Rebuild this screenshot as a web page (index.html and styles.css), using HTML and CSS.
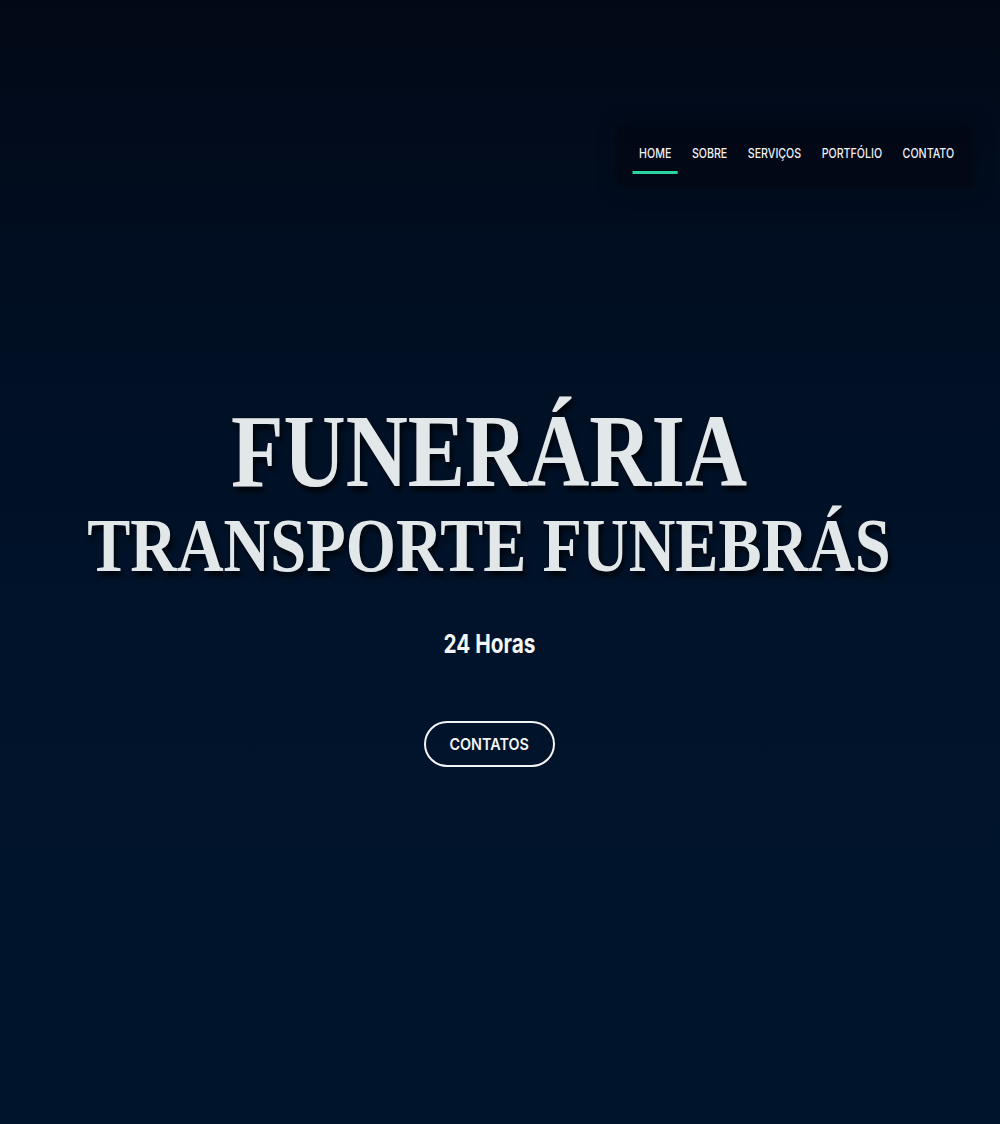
FILE: index.html
```html
<!DOCTYPE html>
<html lang="pt-BR">
<head>
<meta charset="utf-8">
<title>Funerária Transporte Funebrás</title>
<link rel="stylesheet" href="styles.css">
</head>
<body>
<div class="page">
  <header class="topbar">
    <nav class="menu">
      <ul class="menu-list">
        <li><a class="menu-link active" href="#">HOME</a></li>
        <li><a class="menu-link" href="#">SOBRE</a></li>
        <li><a class="menu-link" href="#">SERVIÇOS</a></li>
        <li><a class="menu-link" href="#">PORTFÓLIO</a></li>
        <li><a class="menu-link" href="#">CONTATO</a></li>
      </ul>
    </nav>
  </header>
  <main class="hero">
    <h1 class="hero-title">
      <span class="title-line one">FUNERÁRIA</span>
      <span class="title-line two">TRANSPORTE FUNEBRÁS</span>
    </h1>
    <p class="hero-sub">24 Horas</p>
    <a class="hero-btn" href="#"><span class="hero-btn-label">CONTATOS</span></a>
  </main>
</div>
</body>
</html>
```
FILE: styles.css
```css
* { box-sizing: border-box; }
html, body { margin: 0; padding: 0; }
body {
  background: #00152c;
  font-family: Inter, "Open Sans", sans-serif;
  color: #e6ecee;
}
.page {
  min-height: 1124px;
  background: linear-gradient(180deg, #020916 0%, #010e22 25%, #00132a 55%, #00152c 100%);
  display: flex;
  flex-direction: column;
}
.topbar {
  display: flex;
  justify-content: flex-end;
  padding: 127px 28px 0 0;
}
.menu {
  background: rgba(3, 6, 16, 0.55);
  box-shadow: 0 0 24px rgba(0, 0, 0, 0.35);
  padding: 0 14px 0 17px;
  transform: scaleX(0.82);
  transform-origin: right center;
}
.menu-list {
  list-style: none;
  margin: 0;
  padding: 0;
  display: flex;
  gap: 9px;
}
.menu-link {
  position: relative;
  display: block;
  padding: 18px 8px 26px;
  font-size: 13px;
  line-height: 16px;
  font-weight: 500;
  color: #eef2f4;
  text-decoration: none;
}
.menu-link.active::after {
  content: "";
  position: absolute;
  left: 0;
  right: 0;
  bottom: 13px;
  height: 3px;
  background: #2dd4a2;
}
.hero {
  display: flex;
  flex-direction: column;
  align-items: center;
  padding-right: 22px;
}
.hero-title {
  margin: 213px 0 0;
  width: 100%;
  font-family: "Liberation Serif", "Times New Roman", serif;
  font-weight: 700;
  color: #e2e8e9;
  text-align: center;
  text-shadow: 3px 5px 6px rgba(0, 0, 0, 0.75);
}
.title-line {
  display: block;
  line-height: 1;
  white-space: nowrap;
}
.title-line.one {
  font-size: 103px;
  transform: scaleX(0.835);
}
.title-line.two {
  font-size: 76px;
  margin-top: 4px;
  transform: scaleX(0.85);
}
.hero-sub {
  margin: 45px 0 0;
  font-size: 26px;
  line-height: 1.2;
  font-weight: 700;
  color: #f4f6f7;
  transform: scaleX(0.8);
}
.hero-btn {
  margin-top: 62px;
  width: 131px;
  height: 46px;
  border: 2px solid #f2f4f5;
  border-radius: 23px;
  display: flex;
  align-items: center;
  justify-content: center;
  color: #f2f4f5;
  text-decoration: none;
}
.hero-btn-label {
  display: inline-block;
  font-size: 16px;
  font-weight: 600;
  transform: scaleX(0.9);
}
```
